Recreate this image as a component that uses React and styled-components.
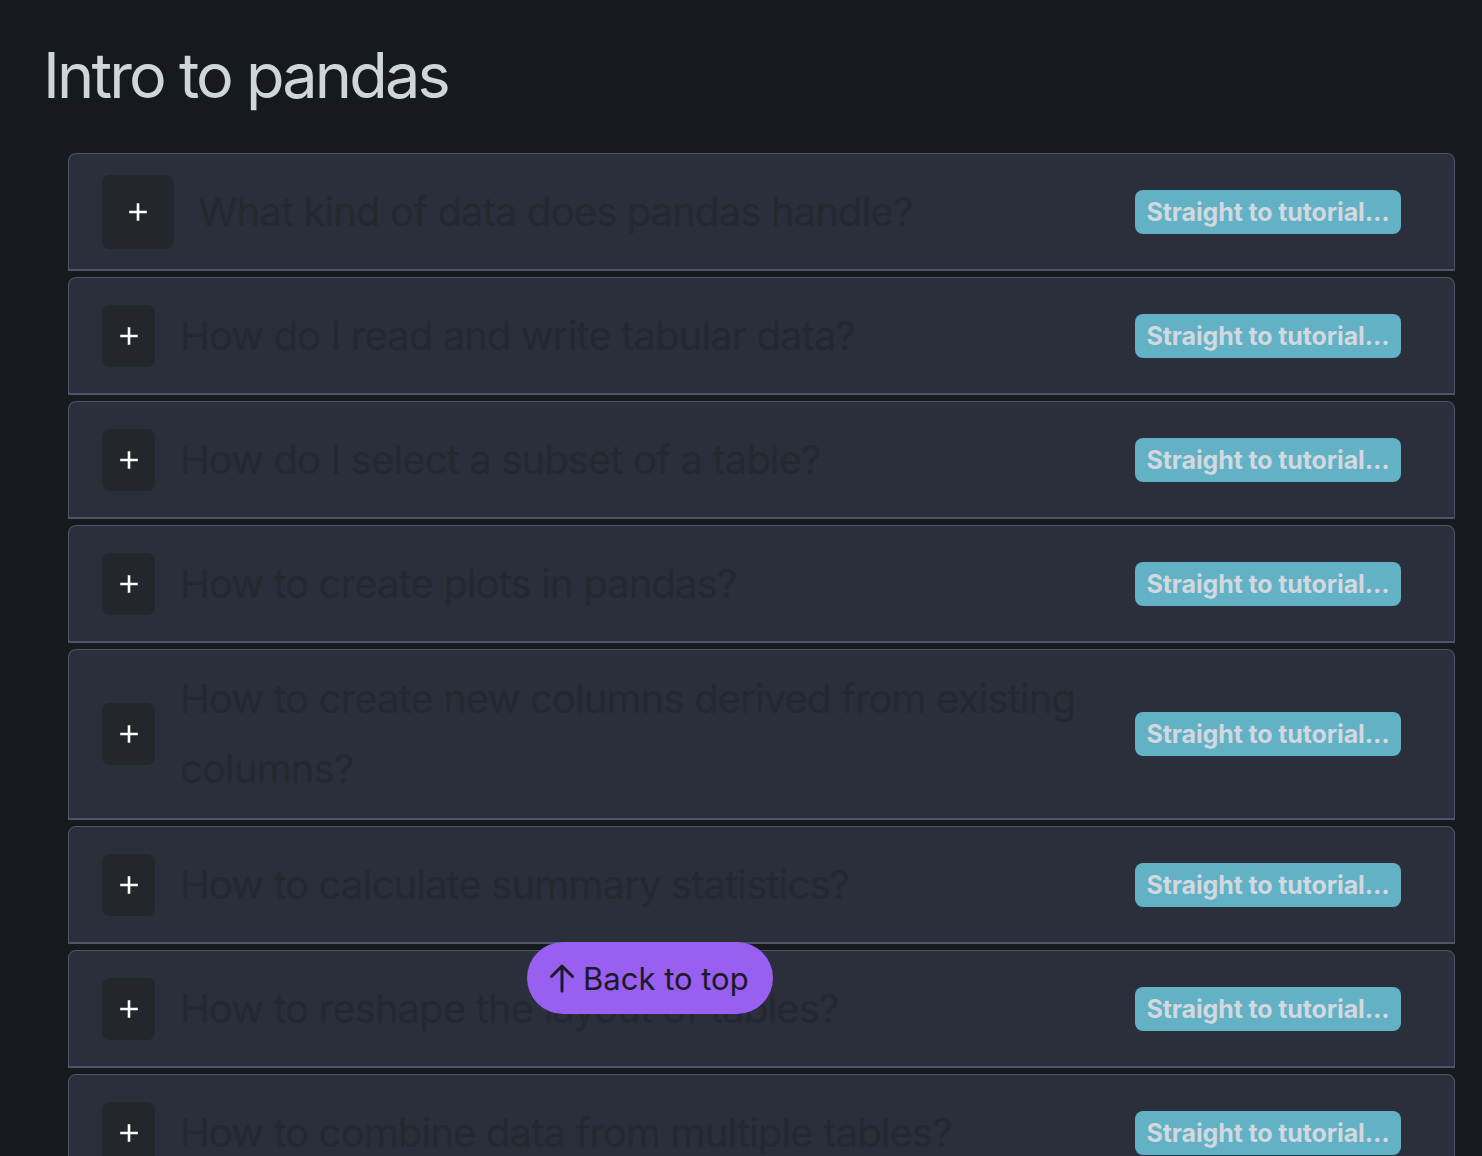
import styled, { createGlobalStyle } from 'styled-components'

const GlobalStyle = createGlobalStyle`
    html, body {
        margin: 0;
        padding: 0;
        background-color: #16191e;
        font-family: 'Inter', 'Noto Sans', sans-serif;
    }
`

const questions = [
    'What kind of data does pandas handle?',
    'How do I read and write tabular data?',
    'How do I select a subset of a table?',
    'How to create plots in pandas?',
    'How to create new columns derived from existing columns?',
    'How to calculate summary statistics?',
    'How to reshape the layout of tables?',
    'How to combine data from multiple tables?',
]

const PlusIcon = () => (
    <svg width="18" height="18" viewBox="0 0 18 18">
        <path d="M9 1.5v15M1.5 9h15" stroke="#ffffff" strokeWidth="2.6" strokeLinecap="square" />
    </svg>
)

const ArrowUp = () => (
    <svg width="26" height="30" viewBox="0 0 26 30">
        <path d="M13 28V3M2.5 13.5L13 3l10.5 10.5" stroke="#1b1a26" strokeWidth="3" fill="none" strokeLinecap="round" strokeLinejoin="round" />
    </svg>
)

export default function App() {
    return (
        <Page>
            <GlobalStyle />
            <Title>Intro to pandas</Title>
            <List>
                {questions.map((q, i) => (
                    <Card key={q}>
                        <ToggleBox $large={i === 0}>
                            <PlusIcon />
                        </ToggleBox>
                        <Question>{q}</Question>
                        <TutorialButton>Straight to tutorial...</TutorialButton>
                    </Card>
                ))}
            </List>
            <BackToTop>
                <ArrowUp />
                Back to top
            </BackToTop>
        </Page>
    )
}

const Page = styled.div`
    padding: 37px 27px 0 43px;
    box-sizing: border-box;
    overflow: hidden;
    height: 1156px;
`
const Title = styled.h1`
    margin: 0 0 40px 0;
    font-family: 'Inter', sans-serif;
    font-weight: 400;
    font-size: 63px;
    line-height: 76px;
    letter-spacing: -0.045em;
    color: #d0d5db;
`
const List = styled.div`
    display: flex;
    flex-direction: column;
    gap: 6px;
    margin-left: 25px;
`
const Card = styled.div`
    display: flex;
    align-items: center;
    min-height: 118px;
    box-sizing: border-box;
    padding: 14px 53px 14px 33px;
    background-color: #2a2f3b;
    border: 1px solid #4b5468;
    border-bottom-width: 2px;
    border-radius: 8px 8px 0 0;
`
const ToggleBox = styled.div`
    flex: none;
    display: flex;
    align-items: center;
    justify-content: center;
    width: ${p => (p.$large ? '72px' : '53px')};
    height: ${p => (p.$large ? '74px' : '62px')};
    margin-right: ${p => (p.$large ? '24px' : '25px')};
    border-radius: 8px;
    background-color: #23262b;
`
const Question = styled.div`
    flex: 1;
    padding-right: 40px;
    font-size: 40px;
    line-height: 70px;
    letter-spacing: -0.022em;
    color: #24282f;
`
const TutorialButton = styled.button`
    flex: none;
    width: 266px;
    height: 44px;
    border: none;
    border-radius: 8px;
    background-color: #62b1c4;
    color: #d2d8df;
    font-family: 'Inter', sans-serif;
    font-weight: 700;
    font-size: 25px;
    letter-spacing: -0.005em;
    padding: 0;
`
const BackToTop = styled.button`
    position: absolute;
    left: 527px;
    top: 942px;
    display: flex;
    align-items: center;
    gap: 8px;
    width: 246px;
    height: 72px;
    padding: 0 0 0 22px;
    border: none;
    border-radius: 36px;
    background-color: #995ff1;
    color: #1b1a26;
    font-family: 'Inter', sans-serif;
    font-size: 31px;
    box-sizing: border-box;
`
